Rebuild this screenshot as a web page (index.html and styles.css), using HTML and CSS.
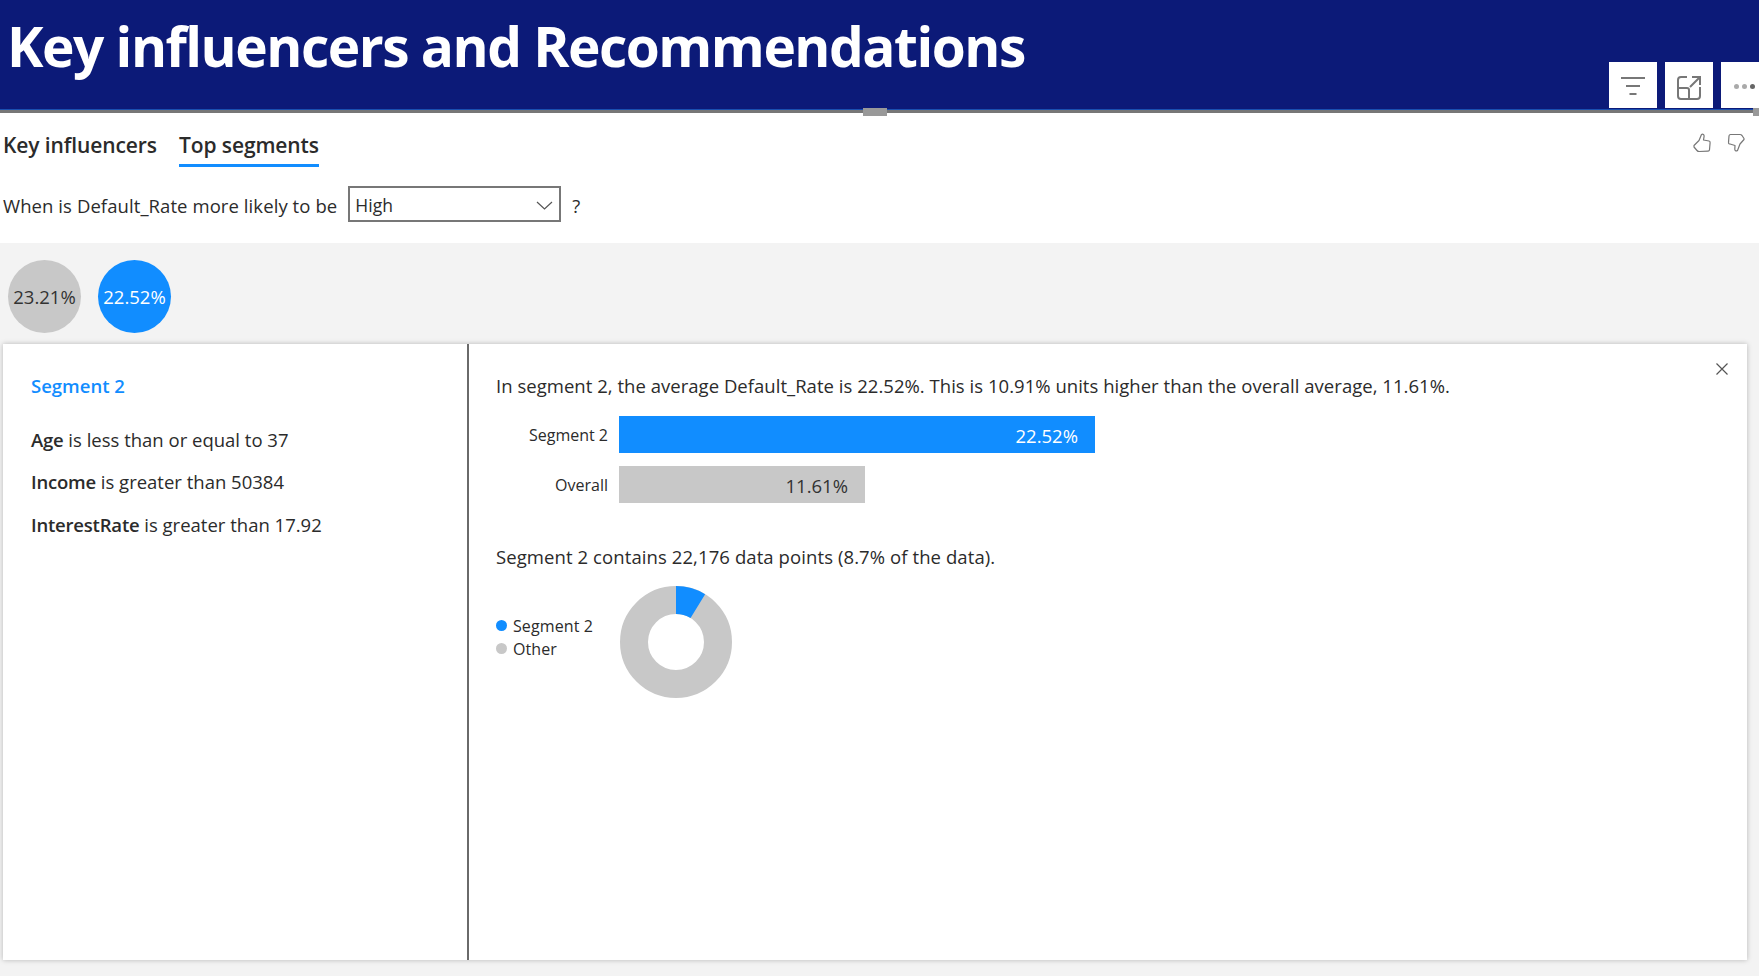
FILE: index.html
```html
<!DOCTYPE html>
<html lang="en">
<head>
    <meta charset="UTF-8">
    <meta name="viewport" content="width=device-width, initial-scale=1.0">
    <title>Key influencers and Recommendations</title>
    <link rel="stylesheet" href="styles.css">
</head>
<body>
    <header class="banner">
        <h1>Key influencers and Recommendations</h1>
        <div class="actions">
            <button class="action action-filter">
                <svg width="24" height="18" viewBox="0 0 24 18" fill="none" stroke="#777" stroke-width="2"><path d="M0 1h24M5 9h14M8.500 17h7"/></svg>
            </button>
            <button class="action action-expand">
                <svg width="26" height="26" viewBox="0 0 26 26" fill="none" stroke="#777" stroke-width="2"><path d="M11 2H5a3 3 0 0 0-3 3v16a3 3 0 0 0 3 3h16a3 3 0 0 0 3-3v-9M2 13h9a2 2 0 0 1 2 2v9M14 12 24 2M16 2h8v8"/></svg>
            </button>
            <button class="action action-more">
                <span class="dot dot-light"></span><span class="dot dot-light"></span><span class="dot"></span>
            </button>
        </div>
    </header>
    <div class="handle handle-top"></div>
    <div class="handle handle-right"></div>

    <section class="controls">
        <div class="tabs">
            <span class="tab">Key influencers</span>
            <span class="tab tab-active">Top segments</span>
            <div class="thumbs">
                <svg width="18" height="20" viewBox="0 0 18 20" fill="none" stroke="#777" stroke-width="1.2" stroke-linejoin="round"><path d="M1 12.500 6 7.500 8.500 1.500c1.500-.8 2.800.3 2.600 1.800L10.500 7l5.500 1c.9.200 1.200.900 1.100 1.800l-.6 7c-.1.900-.8 1.400-1.600 1.300L6 18.500c-1 0-1.500-.4-2-1L1 14z"/></svg>
                <svg width="18" height="20" viewBox="0 0 18 20" fill="none" stroke="#777" stroke-width="1.2" stroke-linejoin="round"><path d="M17 6.500 13 11l-2.500 6.500c-1.500 1-2.900 0-2.700-1.500L8 12.500 3 11c-1 0-1.600-.7-1.500-1.600L2 3c.1-1 .8-1.600 1.700-1.500L13 1.500c1 0 1.500.4 2 1l2 3z"/></svg>
            </div>
        </div>
        <div class="question">
            <span class="question-text">When is Default_Rate more likely to be</span>
            <div class="dropdown">
                <span>High</span>
                <svg width="17" height="9" viewBox="0 0 17 9" fill="none" stroke="#555" stroke-width="1.2"><path d="M1 1l7.500 7L16 1"/></svg>
            </div>
            <span class="question-text">?</span>
        </div>
    </section>

    <main class="segments">
        <div class="bubbles">
            <div class="bubble">23.21%</div>
            <div class="bubble bubble-active">22.52%</div>
        </div>
        <div class="card">
            <aside class="card-left">
                <h2>Segment 2</h2>
                <p class="rule rule-first"><b>Age</b> is less than or equal to 37</p>
                <p class="rule"><b>Income</b> is greater than 50384</p>
                <p class="rule rule-last"><b>InterestRate</b> is greater than 17.92</p>
            </aside>
            <div class="card-right">
                <svg class="close" width="12" height="12" viewBox="0 0 12 12" fill="none" stroke="#555" stroke-width="1.2"><path d="M.5.500l11 11M11.500.500l-11 11"/></svg>
                <p class="sentence">In segment 2, the average Default_Rate is 22.52%. This is 10.91% units higher than the overall average, 11.61%.</p>
                <div class="bars">
                    <div class="bar-row">
                        <span class="bar-label">Segment 2</span>
                        <div class="bar bar-blue" style="width: 476px">22.52%</div>
                    </div>
                    <div class="bar-row">
                        <span class="bar-label">Overall</span>
                        <div class="bar bar-grey" style="width: 246px">11.61%</div>
                    </div>
                </div>
                <p class="sentence sentence-points">Segment 2 contains 22,176 data points (8.7% of the data).</p>
                <div class="share">
                    <div class="legend">
                        <div class="legend-item"><span class="swatch swatch-blue"></span>Segment 2</div>
                        <div class="legend-item"><span class="swatch swatch-grey"></span>Other</div>
                    </div>
                    <svg class="donut" width="112" height="112" viewBox="0 0 112 112" fill="none" stroke-width="28">
                        <circle cx="56" cy="56" r="42" stroke="#c8c8c8"/>
                        <circle cx="56" cy="56" r="42" stroke="#118dff" stroke-dasharray="22.96 240.93" transform="rotate(-90 56 56)"/>
                    </svg>
                </div>
            </div>
        </div>
    </main>
</body>
</html>
```

FILE: styles.css
```css
* {
    box-sizing: border-box;
}
body {
    font-family: 'Open Sans', sans-serif;
    margin: 0;
    height: 976px;
    overflow: hidden;
    position: relative;
    background: #fff;
    color: #2b2b2b;
    display: flex;
    flex-direction: column;
}
.banner {
    height: 113px;
    flex: none;
    background: #0c1a78;
    border-bottom: 3px solid #777;
    box-shadow: inset 0 -1px 0 #1a4fb0;
    display: flex;
    justify-content: space-between;
    padding-left: 7px;
}
h1 {
    margin: 0;
    color: #fff;
    font-size: 55px;
    font-weight: 700;
    line-height: 92px;
    letter-spacing: -1.5px;
    white-space: nowrap;
}
.actions {
    display: flex;
    gap: 8px;
    margin-top: 62px;
    height: 46px;
}
.action {
    width: 48px;
    height: 46px;
    padding: 0;
    border: none;
    background: #fff;
    display: flex;
    align-items: center;
    justify-content: center;
}
.action-filter {
    padding-top: 2px;
}
.action-expand {
    padding-top: 6px;
}
.action-more {
    width: 38px;
    gap: 3px;
    justify-content: flex-start;
    padding: 2px 0 0 13px;
}
.dot {
    width: 5px;
    height: 5px;
    border-radius: 50%;
    background: #666;
}
.dot-light {
    background: #aaa;
}
.handle {
    position: absolute;
    background: #999;
    height: 8px;
    top: 108px;
}
.handle-top {
    left: 863px;
    width: 24px;
}
.handle-right {
    right: 0;
    width: 6px;
}
.controls {
    height: 130px;
    flex: none;
    padding-left: 3px;
}
.tabs {
    display: flex;
    gap: 22px;
    height: 54px;
    font-size: 21px;
    font-weight: 600;
}
.tab {
    height: 54px;
    padding-top: 15px;
    line-height: 34px;
    letter-spacing: -0.1px;
    white-space: nowrap;
}
.tab-active {
    border-bottom: 3px solid #118dff;
}
.thumbs {
    margin-left: auto;
    margin-right: 14px;
    padding-top: 20px;
    display: flex;
    gap: 16px;
}
.question {
    display: flex;
    align-items: center;
    gap: 11px;
    height: 36px;
    margin-top: 19px;
    font-size: 18.5px;
    letter-spacing: 0.08px;
}
.question-text {
    padding-top: 2px;
}
.dropdown {
    width: 213px;
    height: 36px;
    border: 2px solid #777;
    display: flex;
    align-items: center;
    justify-content: space-between;
    padding: 2px 6px 0 5px;
    font-size: 17.5px;
}
.segments {
    flex: 1;
    background: #f3f3f3;
    padding: 17px 12px 16px 3px;
    display: flex;
    flex-direction: column;
}
.bubbles {
    display: flex;
    gap: 17px;
    padding-left: 5px;
    height: 84px;
}
.bubble {
    width: 73px;
    height: 73px;
    border-radius: 50%;
    background: #c8c8c8;
    color: #333;
    display: flex;
    align-items: center;
    justify-content: center;
    font-size: 18.5px;
}
.bubble-active {
    background: #118dff;
    color: #fff;
}
.card {
    flex: 1;
    background: #fff;
    box-shadow: 0 0 5px rgba(0, 0, 0, 0.25);
    display: flex;
}
.card-left {
    width: 466px;
    flex: none;
    border-right: 2px solid #6a6a6a;
    padding: 28px 0 0 28px;
    font-size: 18.5px;
}
h2 {
    margin: 0;
    color: #118dff;
    font-size: 18.5px;
    font-weight: 600;
    line-height: 28px;
}
.rule {
    margin: 14px 0 0;
    line-height: 28px;
}
.rule-first {
    margin-top: 26px;
}
.rule-last {
    margin-top: 15px;
}
.rule b {
    font-weight: 600;
    letter-spacing: -0.2px;
}
.card-right {
    flex: 1;
    position: relative;
    padding: 28px 0 0 27px;
    font-size: 18.5px;
}
.close {
    position: absolute;
    top: 19px;
    right: 19px;
}
.sentence {
    margin: 0;
    line-height: 28px;
    letter-spacing: 0.03px;
}
.bars {
    margin-top: 16px;
    display: flex;
    flex-direction: column;
    gap: 13px;
}
.bar-row {
    display: flex;
    align-items: center;
    gap: 11px;
}
.bar-label {
    width: 112px;
    padding-top: 1px;
    text-align: right;
    font-size: 16px;
}
.bar {
    height: 37px;
    display: flex;
    align-items: center;
    justify-content: flex-end;
    padding: 1px 17px 0 0;
    font-size: 18.5px;
}
.bar-blue {
    background: #118dff;
    color: #fff;
}
.bar-grey {
    background: #c8c8c8;
    color: #333;
}
.sentence-points {
    margin-top: 40px;
    letter-spacing: 0.09px;
}
.share {
    margin-top: 15px;
    display: flex;
    gap: 27px;
}
.legend {
    width: 97px;
    padding-top: 28px;
    font-size: 16px;
    letter-spacing: 0.1px;
}
.legend-item {
    display: flex;
    align-items: center;
    gap: 6px;
    height: 23px;
}
.swatch {
    width: 11px;
    height: 11px;
    border-radius: 50%;
}
.swatch-blue {
    background: #118dff;
}
.swatch-grey {
    background: #c8c8c8;
}
```
